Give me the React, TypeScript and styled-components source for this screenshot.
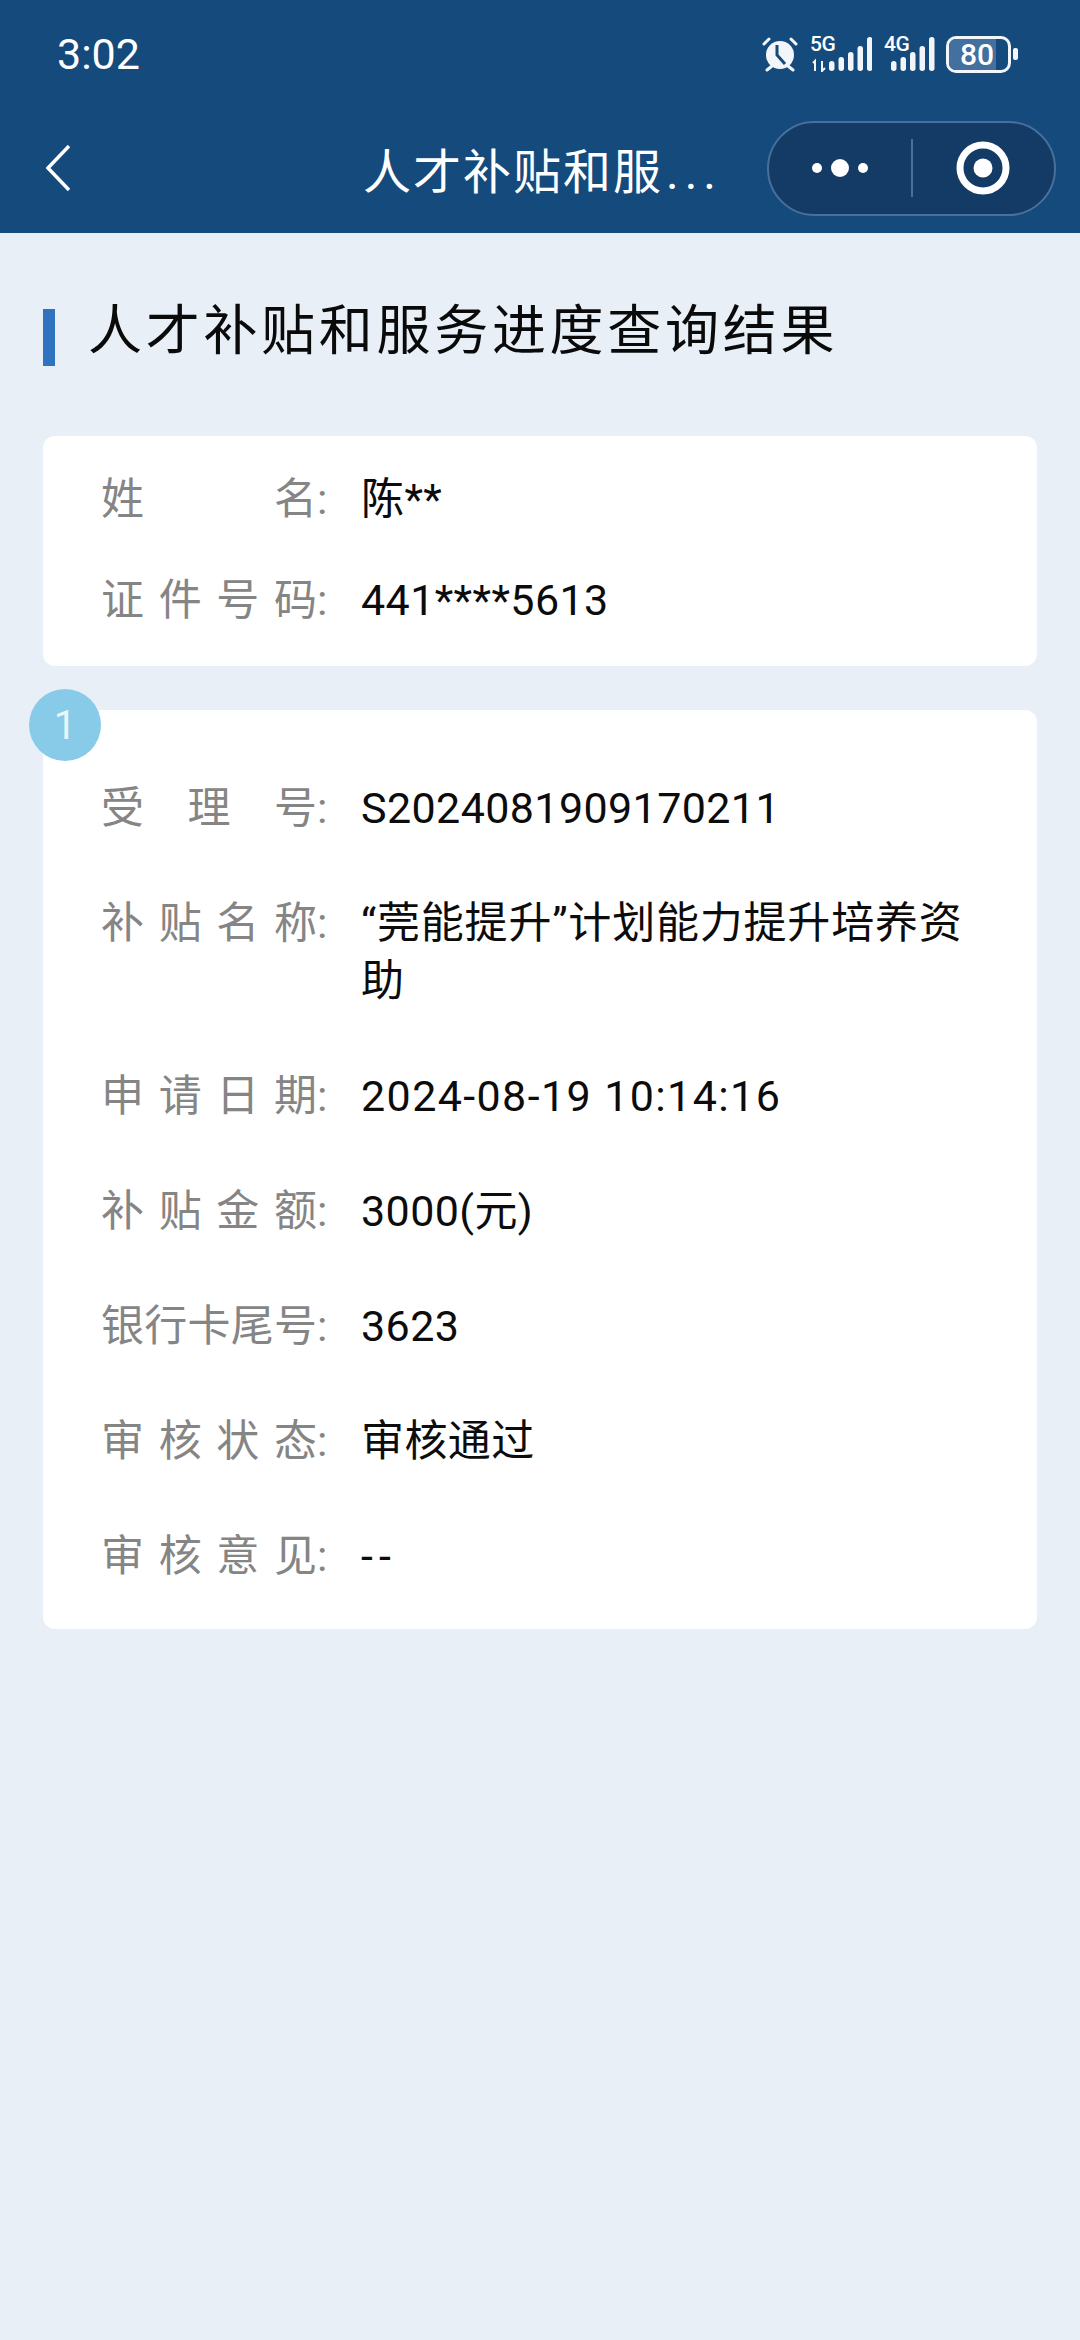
import React from 'react'
import styled, { createGlobalStyle } from 'styled-components'

const GlobalStyle = createGlobalStyle`
  html, body {
    margin: 0;
    padding: 0;
    background: #e9eff7;
  }
  body {
    font-family: Roboto, "Noto Sans CJK SC", sans-serif;
  }
`

const Page = styled.div`
  width: 1080px;
  height: 2340px;
  overflow: hidden;
  background: #e9eff7;
`

const Header = styled.header`
  height: 233px;
  background: #154a7c;
  color: #fff;
  display: flex;
  flex-direction: column;
`

const StatusBar = styled.div`
  height: 108px;
  padding: 0 62px 0 57px;
  display: flex;
  align-items: center;
  justify-content: space-between;
  box-sizing: border-box;
`

const Clock = styled.span`
  font-size: 43px;
  font-weight: 400;
`

const StatusIcons = styled.div`
  display: flex;
  align-items: center;
  gap: 12px;
`

const NetGroup = styled.div<{ $width: number }>`
  position: relative;
  width: ${(p) => p.$width}px;
  height: 36px;
`

const NetLabel = styled.span`
  position: absolute;
  left: 0;
  top: -1px;
  font-size: 21px;
  line-height: 18px;
  font-weight: 500;
  letter-spacing: -0.5px;
`

const Battery = styled.div`
  position: relative;
  width: 65px;
  height: 37px;
  box-sizing: border-box;
  border: 3px solid #f2f6fa;
  border-radius: 10px;
  display: flex;
  align-items: center;
  justify-content: center;
  font-size: 30px;
  font-weight: 500;
  overflow: hidden;
  padding-right: 3px;
  &::before {
    content: '';
    position: absolute;
    left: 0;
    top: 0;
    bottom: 0;
    width: 80%;
    background: #44709f;
  }
`

const BatteryText = styled.span`
  position: relative;
`

const BatteryCap = styled.div`
  width: 5px;
  height: 12px;
  margin-left: -10px;
  border-radius: 2px;
  background: #f2f6fa;
`

const NavBar = styled.div`
  flex: 1;
  display: flex;
  align-items: center;
  padding: 0 24px 5px 46px;
`

const BackButton = styled.div`
  width: 24px;
  height: 46px;
  display: flex;
`

const NavTitle = styled.div`
  margin-left: 293px;
  font-size: 48px;
  letter-spacing: 2px;
  white-space: nowrap;
`

const NavDots = styled.span`
  margin-left: 3px;
  letter-spacing: 6px;
`

const Capsule = styled.div`
  margin-left: auto;
  width: 289px;
  height: 95px;
  box-sizing: border-box;
  border: 2px solid #47709c;
  border-radius: 48px;
  background: #133b66;
  display: flex;
  align-items: center;
`

const CapsuleSide = styled.div`
  flex: 1 1 0;
  display: flex;
  align-items: center;
  justify-content: center;
`

const CapsuleLine = styled.div`
  width: 2px;
  height: 58px;
  background: #47709c;
`

const Content = styled.main`
  padding: 0 43px;
`

const TitleRow = styled.div`
  height: 203px;
  display: flex;
  align-items: center;
`

const TitleMark = styled.div`
  width: 12px;
  height: 57px;
  margin-top: 6px;
  background: #2f73bf;
`

const Title = styled.h1`
  margin: 0 0 16px 33px;
  font-size: 54px;
  font-weight: 400;
  letter-spacing: 3.7px;
  white-space: nowrap;
  color: #0a0a0a;
`

const Card = styled.section<{ $top: number; $bottom: number; $gap: number }>`
  position: relative;
  background: #fff;
  border-radius: 12px;
  margin-bottom: 44px;
  padding: ${(p) => p.$top}px 56px ${(p) => p.$bottom}px 58px;
  display: flex;
  flex-direction: column;
  gap: ${(p) => p.$gap}px;
`

const Badge = styled.div`
  position: absolute;
  left: -14px;
  top: -21px;
  width: 72px;
  height: 72px;
  border-radius: 50%;
  background: #87cbe9;
  color: #eaf6fb;
  font-size: 40px;
  display: flex;
  align-items: center;
  justify-content: center;
`

const Row = styled.div`
  display: flex;
  font-size: 43px;
  line-height: 58px;
`

const Label = styled.div`
  width: 216px;
  flex: none;
  color: #858585;
  text-align: justify;
  text-align-last: justify;
`

const Colon = styled.div`
  width: 44px;
  flex: none;
  color: #858585;
`

const Value = styled.div<{ $spacing?: number }>`
  color: #0c0c0c;
  max-width: 620px;
  letter-spacing: ${(p) => p.$spacing ?? 0.4}px;
`

function SignalBars({ start, arrows }: { start: number; arrows?: boolean }) {
  const heights = [10, 14, 19, 25, 34]
  return (
    <svg width="62" height="36" viewBox="0 0 62 36" style={{ position: 'absolute', left: 0, top: 0 }}>
      {heights.map((h, i) => (
        <rect key={i} x={start + i * 9.5} y={35 - h} width="5.5" height={h} rx="2.7" fill="#f2f6fa" />
      ))}
      {arrows && <path d="M3 27l2-2v10M12 25v10l3-3" fill="none" stroke="#f2f6fa" strokeWidth="2" />}
    </svg>
  )
}

function AlarmIcon() {
  return (
    <svg width="36" height="36" viewBox="0 0 36 36">
      <circle cx="18" cy="19" r="14" fill="#f2f6fa" />
      <path d="M15 9v10l8 9" fill="none" stroke="#154a7c" strokeWidth="3" />
      <path d="M2 8l5-5M34 8l-5-5M5 34l5-4M31 34l-5-4" stroke="#f2f6fa" strokeWidth="3" strokeLinecap="round" />
    </svg>
  )
}

export default function App() {
  return (
    <Page>
      <GlobalStyle />
      <Header>
        <StatusBar>
          <Clock>3:02</Clock>
          <StatusIcons>
            <AlarmIcon />
            <NetGroup $width={62}>
              <NetLabel>5G</NetLabel>
              <SignalBars start={19} arrows />
            </NetGroup>
            <NetGroup $width={50}>
              <NetLabel>4G</NetLabel>
              <SignalBars start={7} />
            </NetGroup>
            <Battery>
              <BatteryText>80</BatteryText>
            </Battery>
            <BatteryCap />
          </StatusIcons>
        </StatusBar>
        <NavBar>
          <BackButton>
            <svg width="24" height="46" viewBox="0 0 24 46">
              <path d="M23 1L2 23l21 22" fill="none" stroke="#fff" strokeWidth="3.5" />
            </svg>
          </BackButton>
          <NavTitle>人才补贴和服<NavDots>...</NavDots></NavTitle>
          <Capsule>
            <CapsuleSide>
              <svg width="60" height="20" viewBox="0 0 60 20">
                <circle cx="7" cy="10" r="5" fill="#fff" />
                <circle cx="30" cy="10" r="9" fill="#fff" />
                <circle cx="53" cy="10" r="5" fill="#fff" />
              </svg>
            </CapsuleSide>
            <CapsuleLine />
            <CapsuleSide>
              <svg width="54" height="54" viewBox="0 0 54 54">
                <circle cx="27" cy="27" r="23" fill="none" stroke="#fff" strokeWidth="7" />
                <circle cx="27" cy="27" r="9.5" fill="#fff" />
              </svg>
            </CapsuleSide>
          </Capsule>
        </NavBar>
      </Header>
      <Content>
        <TitleRow>
          <TitleMark />
          <Title>人才补贴和服务进度查询结果</Title>
        </TitleRow>
        <Card $top={34} $bottom={37} $gap={43}>
          <Row><Label>姓名</Label><Colon>:</Colon><Value>陈**</Value></Row>
          <Row><Label>证件号码</Label><Colon>:</Colon><Value>441****5613</Value></Row>
        </Card>
        <Card $top={69} $bottom={44} $gap={57}>
          <Badge>1</Badge>
          <Row><Label>受理号</Label><Colon>:</Colon><Value>S2024081909170211</Value></Row>
          <Row><Label>补贴名称</Label><Colon>:</Colon><Value $spacing={0.8}>“莞能提升”计划能力提升培养资助</Value></Row>
          <Row><Label>申请日期</Label><Colon>:</Colon><Value $spacing={1.4}>2024-08-19 10:14:16</Value></Row>
          <Row><Label>补贴金额</Label><Colon>:</Colon><Value>3000(元)</Value></Row>
          <Row><Label>银行卡尾号</Label><Colon>:</Colon><Value>3623</Value></Row>
          <Row><Label>审核状态</Label><Colon>:</Colon><Value>审核通过</Value></Row>
          <Row><Label>审核意见</Label><Colon>:</Colon><Value $spacing={6}>--</Value></Row>
        </Card>
      </Content>
    </Page>
  )
}
